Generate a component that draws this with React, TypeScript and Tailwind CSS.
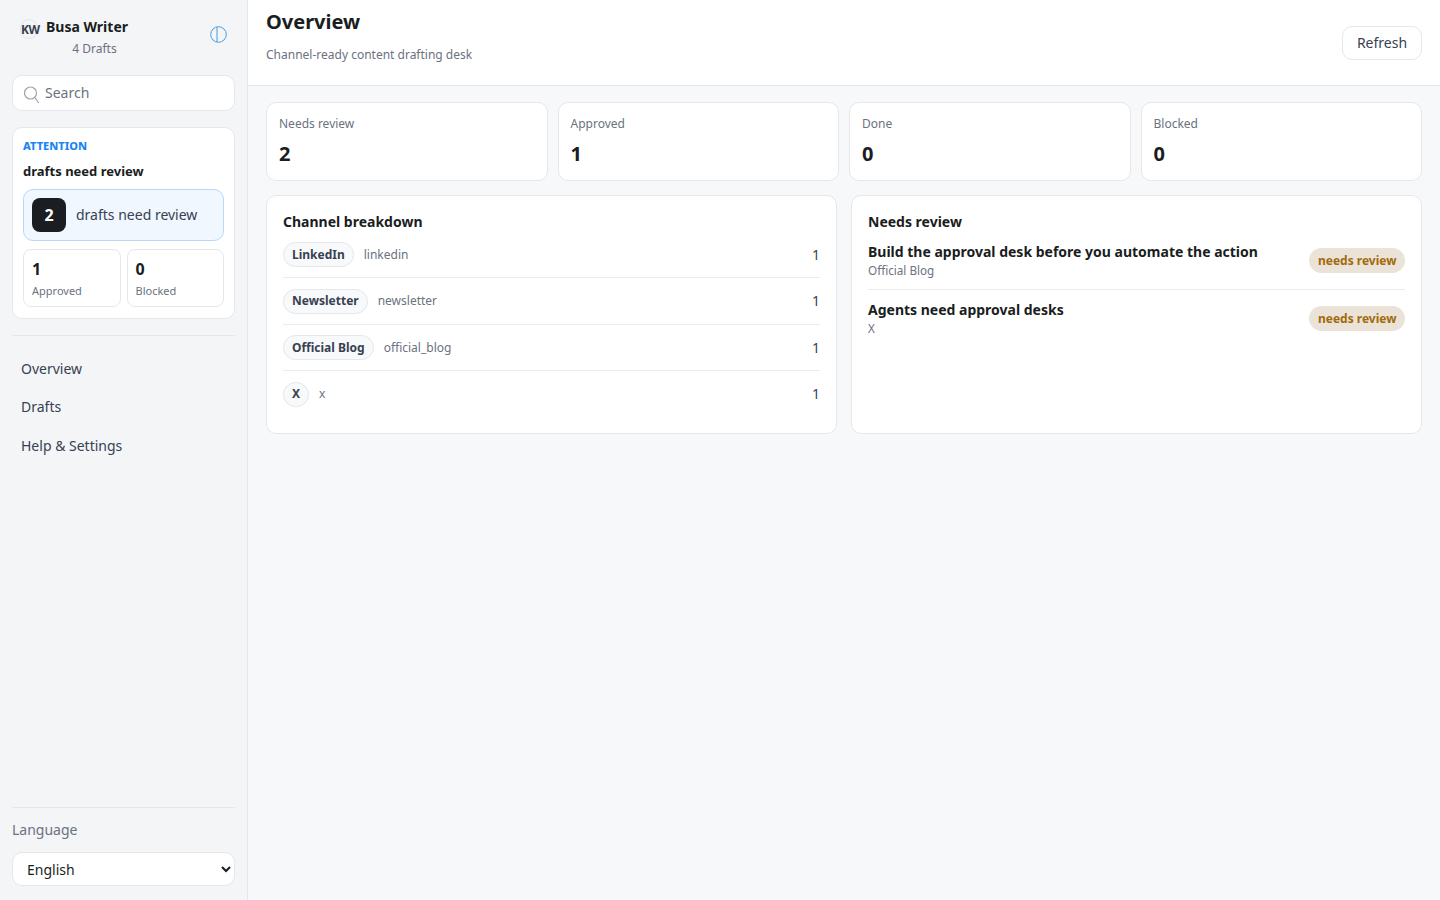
import React from 'react';

const font = { fontFamily: '"Noto Sans", sans-serif' };

const stats = [
  { label: 'Needs review', value: 2 },
  { label: 'Approved', value: 1 },
  { label: 'Done', value: 0 },
  { label: 'Blocked', value: 0 },
];

const channels = [
  { name: 'LinkedIn', slug: 'linkedin', h: 'h-[46px]' },
  { name: 'Newsletter', slug: 'newsletter', h: 'h-[47px]' },
  { name: 'Official Blog', slug: 'official_blog', h: 'h-[46px]' },
  { name: 'X', slug: 'x', h: 'h-[46px]' },
];

const reviews = [
  { title: 'Build the approval desk before you automate the action', sub: 'Official Blog' },
  { title: 'Agents need approval desks', sub: 'X' },
];

function StatusBadge() {
  return (
    <span className="flex h-[25px] items-center rounded-full bg-[#ebe3d7] px-[8.5px] text-xs font-bold text-[#a16a0c]">
      needs review
    </span>
  );
}

function Sidebar() {
  return (
    <aside className="flex h-full w-[248px] shrink-0 flex-col border-r border-[#e3e6ea] bg-[#f3f5f7] px-3 pb-[14px]">
      <div className="flex h-[75px] items-start justify-between pl-2 pr-[8px] pt-[16px]">
        <div className="flex">
          <span className="mt-[3px] flex h-5 w-[18px] items-center whitespace-nowrap rounded-full border border-[#e3e6ea] pt-[1px] text-xs font-bold tracking-[-0.4px] text-[#374151]">
            KW
          </span>
          <div className="ml-2 flex flex-col items-center">
            <span className="text-sm leading-[22px] font-bold text-[#1a1d21]">Busa Writer</span>
            <span className="mt-[1px] pl-[15px] text-xs leading-[20px] text-[#6b7280]">4 Drafts</span>
          </div>
        </div>
        <svg className="mt-[10px]" width="17" height="17" viewBox="0 0 17 17" fill="none" stroke="#4a9be0" strokeWidth="1">
          <circle cx="8.5" cy="8.5" r="7.8" />
          <path d="M7 1v15" />
        </svg>
      </div>

      <div className="flex h-9 items-center rounded-[10px] border border-[#e5e7eb] bg-white pl-[11px]">
        <svg width="16" height="20" viewBox="0 0 16 20" fill="none" stroke="#9ca3af" strokeWidth="1.2" className="mt-[3px]">
          <circle cx="6.5" cy="8" r="6" />
          <path d="M11 12.5l3.7 5.5" />
        </svg>
        <span className="ml-[5px] text-sm text-[#6b7280]">Search</span>
      </div>

      <section className="mt-4 h-[192px] rounded-[10px] border border-[#e5e7eb] bg-white px-[10px] pt-[10px]">
        <div className="text-[11px] leading-4 font-extrabold text-[#1a86f0]">ATTENTION</div>
        <div className="mt-[9px] text-[13px] leading-4 font-bold text-[#1a1d21]">drafts need review</div>
        <div className="mt-[10px] flex h-[52px] items-center rounded-[10px] border border-[#b9d8f5] bg-[#f0f7ff] pl-2">
          <span className="flex h-[34px] w-[34px] items-center justify-center rounded-lg bg-[#1a1d21] text-base font-bold text-white">
            2
          </span>
          <span className="ml-[10px] text-sm text-[#374151]">drafts need review</span>
        </div>
        <div className="mt-2 grid grid-cols-2 gap-[6px]">
          <div className="h-[58px] rounded-lg border border-[#e5e7eb] px-2 pt-2">
            <div className="text-base leading-[22px] font-bold text-[#1a1d21]">1</div>
            <div className="mt-[3px] text-[11px] leading-4 text-[#6b7280]">Approved</div>
          </div>
          <div className="h-[58px] rounded-lg border border-[#e5e7eb] px-2 pt-2">
            <div className="text-base leading-[22px] font-bold text-[#1a1d21]">0</div>
            <div className="mt-[3px] text-[11px] leading-4 text-[#6b7280]">Blocked</div>
          </div>
        </div>
      </section>

      <div className="mt-4 border-t border-[#e3e6ea]" />

      <nav className="mt-[14px] flex flex-col px-[9px] text-sm text-[#374151]">
        <span className="flex h-[38px] items-center">Overview</span>
        <span className="flex h-[38px] items-center">Drafts</span>
        <span className="flex h-[39px] items-center">Help &amp; Settings</span>
      </nav>

      <div className="mt-auto border-t border-[#e3e6ea] pt-[12px]">
        <div className="text-sm leading-5 text-[#6b7280]">Language</div>
        <select
          defaultValue="en"
          className="mt-[12px] h-[34px] w-full rounded-[10px] border border-[#e5e7eb] bg-white pl-[10px] text-sm text-[#1a1d21]"
          style={font}
        >
          <option value="en">English</option>
        </select>
      </div>
    </aside>
  );
}

function Main() {
  return (
    <main className="flex h-full min-w-0 flex-1 flex-col">
      <header className="flex h-[86px] shrink-0 items-center justify-between border-b border-[#e5e7eb] bg-white pl-[18px] pr-[18px]">
        <div className="self-start pt-[7px]">
          <h1 className="text-xl leading-[30px] font-bold text-[#1a1d21]">Overview</h1>
          <p className="mt-[9px] text-xs leading-[18px] text-[#6b7280]">Channel-ready content drafting desk</p>
        </div>
        <button
          type="button"
          className="mt-[1px] h-[34px] w-[80px] rounded-[10px] border border-[#e5e7eb] bg-white text-sm text-[#374151]"
        >
          Refresh
        </button>
      </header>

      <div className="flex flex-col gap-[14px] px-[18px] pt-4">
        <div className="grid grid-cols-4 gap-[10px]">
          {stats.map((stat) => (
            <div key={stat.label} className="h-[79px] rounded-[10px] border border-[#e5e7eb] bg-white px-3 pt-[12px]">
              <div className="text-xs leading-[18px] text-[#6b7280]">{stat.label}</div>
              <div className="mt-[7px] text-xl leading-7 font-bold text-[#1a1d21]">{stat.value}</div>
            </div>
          ))}
        </div>

        <div className="grid grid-cols-2 gap-[14px]">
          <section className="h-[239px] rounded-[10px] border border-[#e5e7eb] bg-white px-4 pt-[15px]">
            <h2 className="text-sm leading-[22px] font-bold text-[#1a1d21]">Channel breakdown</h2>
            <div className="-mt-[1px]">
              {channels.map((channel, index) => (
                <div
                  key={channel.slug}
                  className={`flex items-center justify-between ${channel.h} ${index < channels.length - 1 ? 'border-b border-[#e9ebef]' : ''}`}
                >
                  <div className="flex items-center gap-[10px]">
                    <span className="flex h-[25px] min-w-[26px] items-center justify-center rounded-full border border-[#e5e7eb] bg-[#f8f9fa] px-2 text-xs font-bold text-[#374151]">
                      {channel.name}
                    </span>
                    <span className="text-xs text-[#6b7280]">{channel.slug}</span>
                  </div>
                  <span className="text-sm text-[#374151]">1</span>
                </div>
              ))}
            </div>
          </section>

          <section className="h-[239px] rounded-[10px] border border-[#e5e7eb] bg-white px-4 pt-[15px]">
            <h2 className="text-sm leading-[22px] font-bold text-[#1a1d21]">Needs review</h2>
            <div className="-mt-[1px]">
              {reviews.map((review, index) => (
                <div
                  key={review.title}
                  className={`flex h-[58px] items-start justify-between pt-[10px] ${index === 0 ? 'border-b border-[#e9ebef]' : ''}`}
                >
                  <div>
                    <div className="text-sm leading-5 font-bold text-[#1a1d21]">{review.title}</div>
                    <div className="text-[11.7px] leading-4 text-[#6b7280]">{review.sub}</div>
                  </div>
                  <div className="pt-[6px]">
                    <StatusBadge />
                  </div>
                </div>
              ))}
            </div>
          </section>
        </div>
      </div>
    </main>
  );
}

export default function App() {
  return (
    <div className="flex h-[900px] w-full overflow-hidden bg-[#f6f8f9]" style={font}>
      <Sidebar />
      <Main />
    </div>
  );
}
